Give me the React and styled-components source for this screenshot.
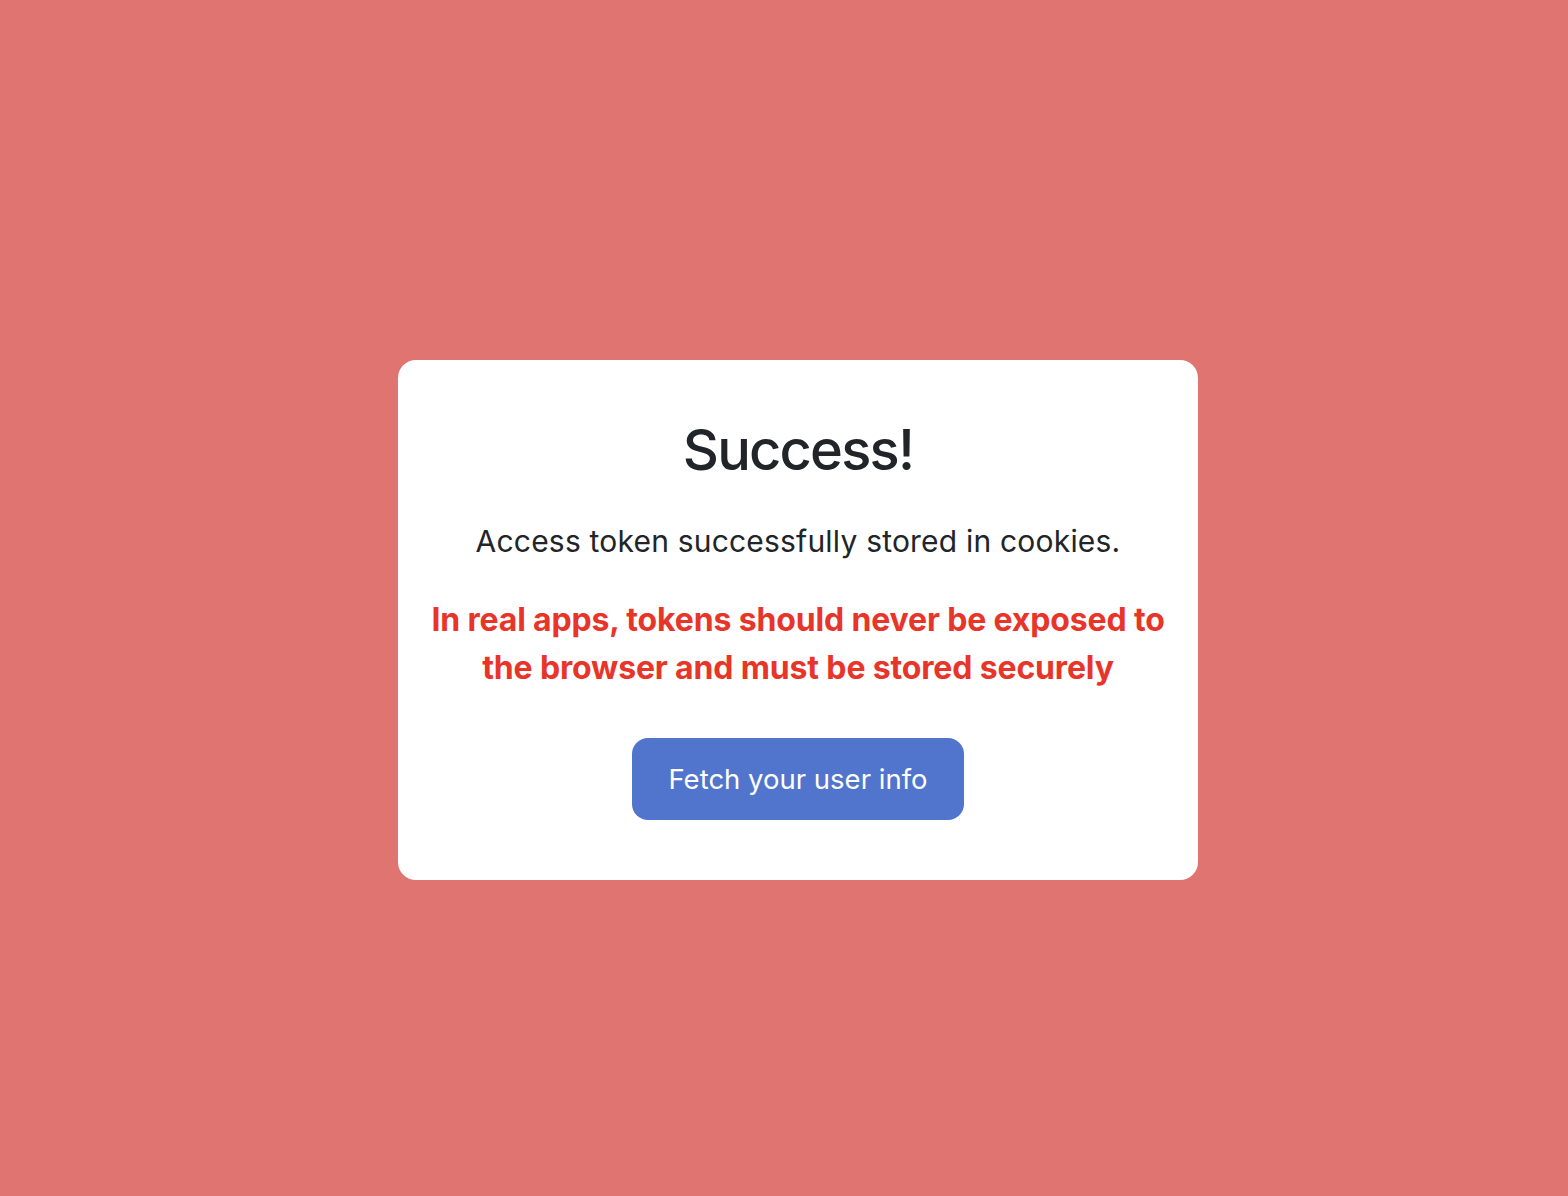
import React from 'react'
import styled, { createGlobalStyle } from 'styled-components'

const GlobalStyle = createGlobalStyle`
  html, body {
    margin: 0;
    padding: 0;
  }
  body {
    background-color: #e07470;
    font-family: Inter, "Noto Sans", sans-serif;
    color: #212529;
  }
`

const Page = styled.div`
  min-height: 100vh;
  box-sizing: border-box;
  padding: 44px 0 0 28px;
  display: flex;
  align-items: center;
  justify-content: center;
`

const Card = styled.div`
  width: 800px;
  box-sizing: border-box;
  background: #ffffff;
  border-radius: 18px;
  padding: 57px 24px 60px;
  display: flex;
  flex-direction: column;
  align-items: center;
  text-align: center;
`

const Title = styled.h1`
  margin: 0;
  font-size: 56px;
  line-height: 1.2;
  font-weight: 500;
  letter-spacing: -1.8px;
`

const Message = styled.p`
  margin: 35px 0 0;
  font-size: 30px;
  line-height: 1.5;
  letter-spacing: 0.2px;
`

const Warning = styled.p`
  margin: 32px 0 0;
  font-size: 32px;
  line-height: 48px;
  font-weight: 700;
  letter-spacing: -0.15px;
  color: #e8352a;
`

const Button = styled.button`
  margin-top: 46px;
  padding: 24px 36px;
  border: none;
  border-radius: 16px;
  background-color: #5174cc;
  color: #ffffff;
  font-family: inherit;
  font-size: 27.5px;
  line-height: 34px;
  cursor: pointer;
`

const App = () => {
  return (
    <>
      <GlobalStyle />
      <Page>
        <Card>
          <Title>Success!</Title>
          <Message>Access token successfully stored in cookies.</Message>
          <Warning>
            In real apps, tokens should never be exposed to
            <br />
            the browser and must be stored securely
          </Warning>
          <Button>Fetch your user info</Button>
        </Card>
      </Page>
    </>
  )
}

export default App
